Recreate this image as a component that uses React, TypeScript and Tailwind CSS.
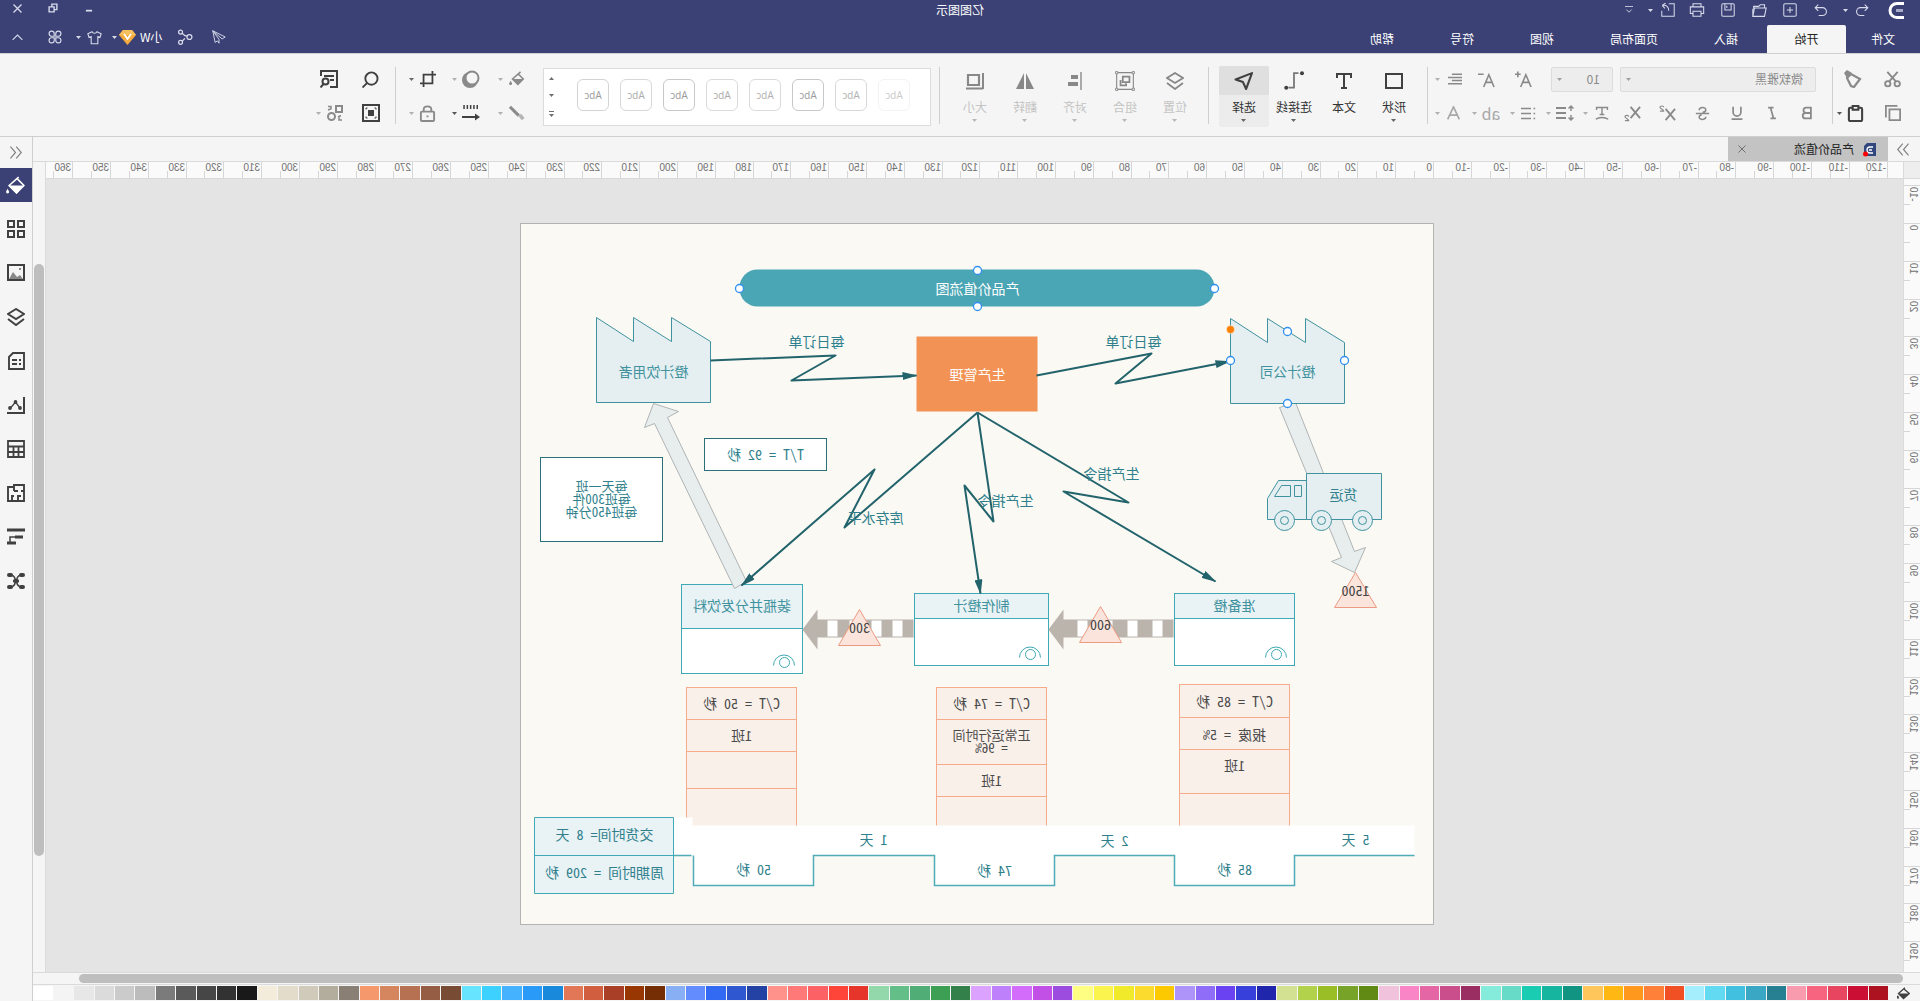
import type { ReactNode } from "react";

const PITCH = 37.8;

const palette = [
    "#ac1220", "#cb0e33", "#e84560", "#f7647f", "#f99bae",
    "#278092", "#3aa8c4", "#41c0e0", "#62daf1", "#a4eefd",
    "#f05023", "#ff8038", "#ff981c", "#ffb713", "#ffc65c",
    "#119482", "#16b59f", "#1acdb2", "#68dac8", "#85ecdb",
    "#9a2d61", "#c94e8b", "#e566a5", "#f985c6", "#f0c2dc",
    "#608a14", "#78a329", "#9abf26", "#b3d24c", "#d3e292",
    "#2026ab", "#3740da", "#6a42f2", "#906df9", "#ae93f9",
    "#fcc900", "#fadb2e", "#f0ea2b", "#fbf44e", "#fdfe82",
    "#9c4de0", "#c24fe6", "#d36bfb", "#bf80fb", "#dca2ff",
    "#33804a", "#3c9f54", "#51ad76", "#63be88", "#92d8ab",
    "#e6362b", "#ff4439", "#fb6165", "#ff7979", "#ff928b",
    "#2441a4", "#2f58d0", "#326af4", "#638dff", "#88aef4",
    "#752d03", "#983702", "#a93f27", "#d15e3e", "#e17757",
    "#198adb", "#2a9af8", "#45b2ff", "#3cd1ff", "#67e4ff",
    "#784c34", "#955d43", "#b57151", "#d5865e", "#f5986b",
    "#8a7f74", "#b3ad9d", "#cfcab9", "#e4dccb", "#f4ecda",
    "#191919", "#323232", "#464646", "#5a5a5a", "#7b7b7b",
    "#bcbcbc", "#cbcbcb", "#dbdbdb", "#e7e7e7", "#f4f4f4", "#ffffff",
];

function Icon({ size = 18, sw = 2, children }: { size?: number; sw?: number; children: ReactNode }) {
    return (
        <svg
            width={size}
            height={size}
            viewBox="0 0 18 18"
            fill="none"
            stroke="currentColor"
            strokeWidth={sw}
            className="shrink-0"
            aria-hidden="true"
        >
            {children}
        </svg>
    );
}

function Caret({ className = "text-[#b0b0b0]" }: { className?: string }) {
    return (
        <span className={`w-2 shrink-0 flex justify-center ${className}`}>
            <svg width="5" height="3" viewBox="0 0 5 3" fill="currentColor" aria-hidden="true">
                <path d="M0 0h5L2.5 3z" />
            </svg>
        </span>
    );
}

function Tool({ label, className, children }: { label: string; className: string; children: ReactNode }) {
    return (
        <button aria-label={label} className={`shrink-0 h-6 flex items-center justify-center ${className}`}>
            {children}
        </button>
    );
}

function Divider({ className = "" }: { className?: string }) {
    return <div className={`shrink-0 w-px h-[57px] mt-[13px] bg-[#cfcfcf] ${className}`} />;
}

function BigTool({ label, tone, active, caret = true, children }: {
    label: string; tone: string; active?: boolean; caret?: boolean; children: ReactNode;
}) {
    return (
        <button className={`shrink-0 w-[50px] h-[61px] mt-3 flex flex-col items-center rounded-xs overflow-hidden ${active ? "bg-[#ececec]" : ""}`}>
            <span className={`w-full h-[29px] flex items-center justify-center ${active ? "bg-[#dfdfdf]" : ""} ${tone}`}>
                {children}
            </span>
            <span className={`text-xs leading-4 mt-1 whitespace-nowrap ${tone === "text-[#404040]" ? "text-[#333]" : "text-[#c4c4c4]"}`}>{label}</span>
            {caret && <Caret className={tone === "text-[#404040]" ? "text-[#666] mt-1" : "text-[#b8b8b8] mt-1"} />}
        </button>
    );
}

function TitleBar() {
    return (
        <div className="h-5 grid grid-cols-[1fr_auto_1fr] grid-rows-[20px] items-center text-[#d8dbec]">
            <div className="h-5 flex items-center">
                <span className="w-8 ml-2 flex justify-center text-white">
                    <svg width="16" height="17" viewBox="0 0 16 17" fill="none" stroke="currentColor" aria-hidden="true">
                        <path d="M0 1.500h7a7 7 0 0 1 0 14H0" strokeWidth="3" />
                        <path d="M1 8.500h7" strokeWidth="3" stroke="#a7abc9" />
                    </svg>
                </span>
                <Tool label="撤销" className="w-6 ml-[6px]">
                    <Icon size={14} sw={1.400}><path d="M5.500 2 1.500 6l4 4M1.500 6H11a5 5 0 0 1 0 10H6" /></Icon>
                </Tool>
                <Caret className="text-[#d8dbec]" />
                <Tool label="重做" className="w-[31px] ml-[5px]">
                    <Icon size={14} sw={1.400}><path d="m12.500 2 4 4-4 4M16.500 6H7a5 5 0 0 0 0 10h5" /></Icon>
                </Tool>
                <Tool label="新建" className="w-[31px]">
                    <Icon size={14} sw={1.300}><rect x="1" y="1" width="16" height="16" rx="1.500" /><path d="M9 5v8M5 9h8" /></Icon>
                </Tool>
                <Tool label="打开" className="w-[31px]">
                    <Icon size={15} sw={1.300}><path d="M3 6V2h5l2 2h6v3M1 6h14l2 10H3L1 6zM17 16V7" /></Icon>
                </Tool>
                <Tool label="保存" className="w-[31px]">
                    <Icon size={14} sw={1.300}><rect x="1" y="1" width="16" height="16" rx="1.500" /><path d="M5 1v8h8V1M10.500 3.500v3" /></Icon>
                </Tool>
                <Tool label="打印" className="w-[31px]">
                    <Icon size={16} sw={1.200}><path d="M4.500 5V2h9v3M4.500 13H1.500V5.500h15V13h-3M4.500 10.500h9V16h-9z" /></Icon>
                </Tool>
                <Tool label="导出" className="w-[27px]">
                    <Icon size={14} sw={1.300}><path d="M8 1H1v16h16v-7M16 3c-5-1-8 2-8 7M16.500 3 12 0M16.500 3 13 7" /></Icon>
                </Tool>
                <Caret className="text-[#d8dbec]" />
                <Tool label="更多" className="w-9">
                    <Icon size={8} sw={2}><path d="M0 1h18M3 8l6 6 6-6" /></Icon>
                </Tool>
            </div>
            <h1 className="text-xs leading-5 text-white">亿图图示</h1>
            <div className="h-4 mb-1 flex items-center justify-end">
                <Tool label="最小化" className="w-9"><Icon size={8} sw={4}><path d="M2 15h14" /></Icon></Tool>
                <Tool label="还原" className="w-9">
                    <Icon size={10} sw={2.500}><path d="M7 7h9v9H7zM7 12H2V2h9v5" /></Icon>
                </Tool>
                <Tool label="关闭" className="w-[35px]"><Icon size={9} sw={2.500}><path d="m1 1 16 16M17 1 1 17" /></Icon></Tool>
            </div>
        </div>
    );
}

function MenuBar() {
    const tabs = ["插入", "页面布局", "视图", "符号", "帮助"];
    return (
        <nav className="h-7 mt-[5px] flex items-center text-xs text-white">
            <button className="w-[74px] h-full">文件</button>
            <button className="w-[79px] mr-px h-full bg-[#f5f5f5] text-[#222] rounded-t-xs">开始</button>
            {tabs.map((t) => (
                <button key={t} className="px-7 h-full">{t}</button>
            ))}
            <div className="ml-auto flex items-center pb-1 text-[#d8dbec]">
                <Tool label="发送" className="w-8">
                    <Icon size={14} sw={1.200}><path d="M17 1 1 9l4 2.500L17 1 9 12v5l2-3 3 2z" /></Icon>
                </Tool>
                <Tool label="分享" className="w-9 mr-1">
                    <Icon size={16} sw={1.400}><circle cx="4" cy="9" r="2.800" /><circle cx="14" cy="3.500" r="2.200" /><circle cx="14" cy="15" r="2.200" /><path d="M6.500 8 9 7.500l3-2.500M9 10.500l3 3" /></Icon>
                </Tool>
                <button className="flex items-center text-white">
                    小W
                    <svg width="17" height="15" viewBox="0 0 17 15" className="ml-1" aria-hidden="true">
                        <path d="M4 0h9l4 5-8.500 10L0 5z" fill="#f5ab3d" />
                        <path d="M4 0h9l4 5H0z" fill="#f8c05c" />
                        <path d="m5 4 3.500 5L12 4" fill="none" stroke="#fff" strokeWidth="1.800" />
                    </svg>
                </button>
                <Caret className="text-[#d8dbec]" />
                <Tool label="皮肤" className="w-6 ml-1">
                    <Icon size={15} sw={1.300}><path d="M6 2 1 4.500 2.500 9 5 8v8.500h8V8l2.500 1L17 4.500 12 2c-1 2.500-5 2.500-6 0z" /></Icon>
                </Tool>
                <Caret className="text-[#d8dbec]" />
                <Tool label="应用" className="w-10">
                    <Icon size={14} sw={1.500}>
                        <path d="M8 8H4.500A3.300 3.300 0 1 1 8 4.500zM10 8V4.500A3.300 3.300 0 1 1 13.500 8zM8 10v3.500A3.300 3.300 0 1 1 4.500 10zM10 10h3.500A3.300 3.300 0 1 1 10 13.500z" />
                    </Icon>
                </Tool>
                <Tool label="收起" className="w-[35px]"><Icon size={11} sw={1.800}><path d="m1 13 8-8 8 8" /></Icon></Tool>
            </div>
        </nav>
    );
}

function FontTools() {
    return (
        <div className="pl-[7px] text-[#8a8a8a]">
            <div className="h-[34px] pl-[9px] flex items-center text-xs">
                <label className="flex items-center">
                    <select aria-label="字体" className="appearance-none w-[196px] h-[25px] pl-3 bg-[#ededed] border border-[#dcdcdc] rounded-xs text-[#8a8a8a]">
                        <option>微软雅黑</option>
                    </select>
                    <span className="-ml-[13px] pointer-events-none"><Caret className="text-[#a0a0a0]" /></span>
                </label>
                <label className="flex items-center ml-3">
                    <select aria-label="字号" className="appearance-none w-[62px] h-[25px] pl-3 bg-[#ededed] border border-[#dcdcdc] rounded-xs text-[#8a8a8a]">
                        <option>10</option>
                    </select>
                    <span className="-ml-[13px] pointer-events-none"><Caret className="text-[#a0a0a0]" /></span>
                </label>
                <Tool label="增大字号" className="w-[30px] ml-[17px]">
                    <Icon size={17}><path d="m1 17 5.500-13L12 17M3 12h7M12 3.500h6M15 .5v6" strokeWidth="1.700" /></Icon>
                </Tool>
                <Tool label="减小字号" className="w-[30px] ml-[7px]">
                    <Icon size={17}><path d="m1 17 5.500-13L12 17M3 12h7M12 3.500h6" strokeWidth="1.700" /></Icon>
                </Tool>
                <Tool label="对齐方式" className="w-[26px] ml-1">
                    <Icon size={14}><path d="M0 3h13M0 7h18M0 11h13M0 15h18" /></Icon>
                </Tool>
                <Caret />
            </div>
            <div className="h-[34px] flex items-center">
                <Tool label="加粗" className="w-[35px]"><Icon size={14} sw={2.300}><path d="M4 2h6a3.400 3.400 0 0 1 0 7H4zM4 9h7a3.500 3.500 0 0 1 0 7H4z" /></Icon></Tool>
                <Tool label="倾斜" className="w-[35px]"><Icon size={14} sw={2.200}><path d="M7 2h7M4 16h7M11 2 7 16" /></Icon></Tool>
                <Tool label="下划线" className="w-[35px]"><Icon size={14} sw={2.200}><path d="M4 1v7a5 5 0 0 0 10 0V1M2 17h14" /></Icon></Tool>
                <Tool label="删除线" className="w-[34px]"><Icon size={15} sw={1.800}><path d="M1 9h16M13 5c0-4-8-4-8-.5 0 2 2 3 4 3M5 13c0 4 8 4 8 .5 0-2-1-2.500-3-3" /></Icon></Tool>
                <Tool label="上标" className="w-9">
                    <Icon size={17} sw={2}><path d="m1 4 10 12M11 4 1 16" /><path d="M13 2.500c0-2 4-2 4 0 0 1.500-4 2-4 4h4" strokeWidth="1.200" /></Icon>
                </Tool>
                <Tool label="下标" className="w-[34px]">
                    <Icon size={17} sw={2}><path d="m1 2 10 12M11 2 1 14" /><path d="M13 12.500c0-2 4-2 4 0 0 1.500-4 2-4 4h4" strokeWidth="1.200" /></Icon>
                </Tool>
                <Tool label="文字方向" className="w-6 ml-[2px]">
                    <Icon size={14}><path d="M2 5V2h14v3M9 2v9M6 11h6M1 17c4-3 12-3 16 0" strokeWidth="1.800" /></Icon>
                </Tool>
                <Caret />
                <Tool label="行距" className="w-6 ml-[5px]">
                    <Icon size={18}><path d="M8 4h10M8 9h10M8 14h10" /><path d="M3 3v4M3 15v-4M.5 4.500 3 2l2.500 2.500M.5 13.500 3 16l2.500-2.500" strokeWidth="1.500" /></Icon>
                </Tool>
                <Caret />
                <Tool label="列表" className="w-6 ml-1">
                    <Icon size={15}><path d="M6 3h12M6 9h12M6 15h12M1 3h2M1 9h2M1 15h2" /></Icon>
                </Tool>
                <Caret />
                <Tool label="大小写" className="w-6 ml-[6px] text-base leading-4 text-[#a8a8a8]">ab</Tool>
                <Caret />
                <Tool label="字体颜色" className="w-6 ml-[5px]">
                    <Icon size={15}><path d="m2 16 7-15 7 15M5 11h8" stroke="#a8a8a8" /></Icon>
                </Tool>
                <Caret />
            </div>
        </div>
    );
}

const styleTones = [
    "border-[#f3f3f3] text-[#c9c9c9]",
    "border-[#d8d8d8] text-[#b0b0b0]",
    "border-[#c8c8c8] text-[#999]",
    "border-[#dadada] text-[#b0b0b0]",
    "border-[#dadada] text-[#aaa]",
    "border-[#c8c8c8] text-[#999]",
    "border-[#d8d8d8] text-[#aaa]",
    "border-[#d3d3d3] text-[#999]",
];

function Ribbon() {
    return (
        <div className="h-[84px] flex bg-[#f5f5f5] border-y border-[#cfcfcf] shrink-0">
            <div className="w-[87px] shrink-0 pt-2 pl-[13px] text-[#8a8a8a]">
                <div className="h-[34px] flex items-center">
                    <Tool label="剪切" className="w-7">
                        <Icon size={17}><circle cx="4" cy="13.500" r="2.800" /><circle cx="14" cy="13.500" r="2.800" /><path d="m5.500 11 9-10M12.500 11l-9-10" /></Icon>
                    </Tool>
                    <Tool label="格式刷" className="w-7 ml-3">
                        <Icon size={18} sw={2.200}><path d="m2 9 9-5 4 4-4 8-3 1z" /><path d="m10 3 5-3 3 3-3 5z" fill="currentColor" stroke="none" /></Icon>
                    </Tool>
                </div>
                <div className="h-[34px] flex items-center">
                    <Tool label="复制" className="w-7">
                        <Icon size={16}><path d="M1 5h12v12H1zM4 1h13v13" /></Icon>
                    </Tool>
                    <Tool label="粘贴" className="w-6 ml-[11px] text-[#404040]">
                        <Icon size={17} sw={2.200}><rect x="2" y="3" width="14" height="14" rx="1.500" /><rect x="6" y="1" width="6" height="4" fill="#f5f5f5" /></Icon>
                    </Tool>
                    <Caret className="text-[#555]" />
                </div>
            </div>
            <Divider />
            <div className="pt-2"><FontTools /></div>
            <Divider className="ml-[6px] mr-2" />
            <BigTool label="形状" tone="text-[#404040]"><Icon><path d="M1 2h16v14H1z" /></Icon></BigTool>
            <BigTool label="文本" tone="text-[#404040]" caret={false}><Icon><path d="M2 6V2h14v4M9 2v14M6 16h6" /></Icon></BigTool>
            <BigTool label="连接线" tone="text-[#404040]">
                <Icon size={20}><path d="M5 2h4v13h5" stroke="#777" strokeWidth="1.600" /><circle cx="1.800" cy="2" r="1.800" fill="currentColor" stroke="none" /><circle cx="16" cy="15" r="1.800" fill="currentColor" stroke="none" /></Icon>
            </BigTool>
            <BigTool label="选择" tone="text-[#404040]" active><Icon size={19}><path d="m1 2 15.500 6-7 2.500L6.500 17z" strokeLinejoin="round" /></Icon></BigTool>
            <Divider className="ml-[10px] mr-2" />
            <BigTool label="位置" tone="text-[#888]"><Icon><path d="m9 1 8 5-8 5-8-5zM1 11l8 6 8-6" strokeWidth="1.800" /></Icon></BigTool>
            <BigTool label="组合" tone="text-[#888]">
                <Icon size={20}><path d="M1.500 1.500h15v15h-15z" strokeWidth="1" /><path d="M5 5h6v5H5zM13 8v5H8v-2" strokeWidth="1.600" /><path d="M.5.5h2v2h-2zM15.500.5h2v2h-2zM.5 15.500h2v2h-2zM15.500 15.500h2v2h-2z" fill="#f5f5f5" strokeWidth=".8" /></Icon>
            </BigTool>
            <BigTool label="对齐" tone="text-[#888]"><Icon><path d="M3 0v18" stroke="#aaa" /><path d="M6 5h7M6 12h10" strokeWidth="4" /></Icon></BigTool>
            <BigTool label="翻转" tone="text-[#888]"><Icon><path d="M8 1v16H0zM10 1v16h8z" fill="currentColor" stroke="none" /></Icon></BigTool>
            <BigTool label="大小" tone="text-[#888]"><Icon><path d="M5 3h11v10H5z" strokeWidth="2.200" /><path d="M1 1v16M1 16.500h17" /></Icon></BigTool>
            <Divider className="ml-[10px] mr-2" />
            <div className="shrink-0 w-[388px] h-[58px] mt-[14px] pl-5 pb-1 flex items-center gap-[11px] bg-white border border-[#dcdcdc]">
                {styleTones.map((tone, i) => (
                    <button key={i} className={`size-8 shrink-0 rounded-md border font-['Open_Sans',sans-serif] text-[10px] ${tone}`}>Abc</button>
                ))}
                <div className="ml-auto w-[18px] -mr-px h-full pt-2 pb-1 flex flex-col items-center justify-between text-[#707070]">
                    <button aria-label="上一行"><svg width="5" height="3" viewBox="0 0 5 3" className="block" fill="currentColor"><path d="M0 3h5L2.500 0z" /></svg></button>
                    <button aria-label="下一行"><svg width="5" height="3" viewBox="0 0 5 3" className="block" fill="currentColor"><path d="M0 0h5L2.500 3z" /></svg></button>
                    <button aria-label="更多样式"><svg width="5" height="6" viewBox="0 0 5 6" className="block" fill="currentColor"><path d="M0 0h5v1H0zM0 3h5L2.500 6z" /></svg></button>
                </div>
            </div>
            <div className="shrink-0 pt-2 pl-[14px] text-[#8a8a8a]">
                <div className="h-[34px] flex items-center">
                    <Tool label="填充" className="w-6">
                        <Icon size={16} sw={1.800}><path d="M5 1l9 8-6 6-6-6 5-5" /><path d="M2 9h12l-6 6zM16 11l2 3a1.500 1.500 0 0 1-3.500 0z" fill="currentColor" stroke="none" /></Icon>
                    </Tool>
                    <Caret />
                    <Tool label="阴影" className="w-6 ml-[14px]">
                        <Icon><circle cx="10" cy="10" r="8" fill="currentColor" stroke="none" /><circle cx="8" cy="8" r="6.500" fill="#f5f5f5" /></Icon>
                    </Tool>
                    <Caret />
                    <Tool label="裁剪" className="w-6 ml-[11px] text-[#404040]"><Icon size={16}><path d="M4 0v14h14M0 4h14v14" /></Icon></Tool>
                    <Caret className="text-[#666]" />
                </div>
                <div className="h-[34px] flex items-center">
                    <Tool label="线条" className="w-6">
                        <Icon size={16}><path d="M17 2 7 12" strokeWidth="3.500" /><path d="m2 16 4-5" strokeWidth="4" stroke="#b5b5b5" /></Icon>
                    </Tool>
                    <Caret />
                    <Tool label="线型" className="w-6 ml-[14px] text-[#404040]">
                        <Icon><path d="M2 3h15" strokeWidth="4" strokeDasharray="1.500 1.800" /><path d="M3 13h15" /><path d="M5 9.500v7L0 13z" fill="currentColor" stroke="none" /></Icon>
                    </Tool>
                    <Caret className="text-[#555]" />
                    <Tool label="锁定" className="w-6 ml-[11px]"><Icon size={17}><rect x="2" y="7" width="14" height="10" rx="1" /><path d="M5 7V4.500C5 .5 13 .5 13 4.500V7M8 12h2" /></Icon></Tool>
                    <Caret />
                </div>
            </div>
            <Divider className="ml-3 mr-3" />
            <div className="shrink-0 pt-2 text-[#404040]">
                <div className="h-[34px] flex items-center">
                    <Tool label="查找" className="w-6"><Icon size={17}><circle cx="8" cy="8" r="6.500" /><path d="m12.500 12.500 5 5" /></Icon></Tool>
                    <Tool label="查找替换" className="w-6 ml-[18px]">
                        <Icon size={18}><path d="M8 17H1V1h16v5M4 6h10M4 10h4" /><circle cx="12.500" cy="11.500" r="3" fill="#f5f5f5" /><path d="m14.500 14 3 3.500" /></Icon>
                    </Tool>
                </div>
                <div className="h-[34px] flex items-center">
                    <Tool label="适应窗口" className="w-6">
                        <Icon size={18} sw={2}><path d="M1 1h16v16H1z" /><path d="M6 6h6v6H6z" fill="currentColor" stroke="none" /><path d="M4 5.500V4h1.500M14 5.500V4h-1.500M4 12.500V14h1.500M14 12.500V14h-1.500" strokeWidth="1" /></Icon>
                    </Tool>
                    <Tool label="替换" className="w-6 ml-3 text-[#8a8a8a]">
                        <Icon size={18}><path d="M2 2h6v6H2z" /><circle cx="12.500" cy="12.500" r="3.500" /><path d="M13 5V2.500h3M12.500 4.500 16 6M5 13v3H2M6 13l-3-1.500" strokeWidth="1.500" /></Icon>
                    </Tool>
                    <Caret />
                </div>
            </div>
        </div>
    );
}

function TabStrip() {
    return (
        <div className="h-[25px] flex items-stretch border-b border-[#dadada]">
            <button aria-label="展开符号库" className="w-8 flex items-center justify-center text-[#808080]">
                <Icon size={13} sw={1.600}><path d="m2 1 7 8-7 8M10 1l7 8-7 8" /></Icon>
            </button>
            <div className="w-40 flex items-center bg-[#c3c3c3] text-xs text-[#222]">
                <svg width="13" height="15" viewBox="0 0 13 15" className="ml-3" aria-hidden="true">
                    <path d="M0 1h9l3 3v10H0z" fill="#33477f" />
                    <path d="M3 5h3a3 3 0 0 1 0 6H3M4 8h3" fill="none" stroke="#fff" strokeWidth="1.300" />
                    <circle cx="10.500" cy="12" r="2.500" fill="#f00" />
                </svg>
                <span className="ml-[9px]">产品价值流</span>
                <button aria-label="关闭标签" className="ml-auto mr-[10px] text-[#666]">
                    <Icon size={8} sw={2}><path d="m1 1 16 16M17 1 1 17" /></Icon>
                </button>
            </div>
        </div>
    );
}

function TopRuler() {
    // 36 steps of ten on the right of the page origin, 12 on its left
    const marks = Array.from({ length: 49 }, (_, i) => i - 12);
    return (
        <svg className="block w-full h-[17px] bg-[#fafafa] border-b border-[#dadada] font-['Liberation_Sans',sans-serif] text-[10px]">
            {marks.map((m) => {
                const x = Math.round(469 + m * PITCH);
                return (
                    <g key={m}>
                        <path d={`M${x} 0h1v17h-1zM${x + 19} 9h1v8h-1z`} fill="#d6d6d6" />
                        <text x={x + 2} y="9" fill="#707070">{m * 10}</text>
                    </g>
                );
            })}
        </svg>
    );
}

function SideRuler() {
    const marks = Array.from({ length: 21 }, (_, i) => i - 1);
    return (
        <svg className="block w-[17px] h-full shrink-0 bg-[#fafafa] border-r border-[#dadada] font-['Liberation_Sans',sans-serif] text-[10px]">
            {marks.map((m) => {
                const y = Math.round(44 + m * PITCH);
                return (
                    <g key={m}>
                        <path d={`M0 ${y}h17v1H0zM10 ${y + 19}h7v1h-7z`} fill="#d6d6d6" />
                        <text transform={`translate(10 ${y + 2}) rotate(-90)`} textAnchor="end" fill="#707070">{m * 10}</text>
                    </g>
                );
            })}
        </svg>
    );
}

const TEAL = "#3f929e";

function Txt({ x, y, fill = "#2f7f8c", children }: { x: number; y: number; fill?: string; children: string }) {
    return <text x={x} y={y + 4} fill={fill} textAnchor="middle">{children}</text>;
}

function Factory({ x, y }: { x: number; y: number }) {
    return (
        <path
            transform={`translate(${x} ${y})`}
            d="M0 85V24L39 0v24L77 0v24L114 0v85z"
            fill="#e5eff1"
            stroke={TEAL}
        />
    );
}

function Process({ x, y, w, h, head, name }: { x: number; y: number; w: number; h: number; head: number; name: string }) {
    return (
        <g>
            <g stroke="#3fa9b5">
                <rect x={x} y={y} width={w} height={h} fill="#fff" />
                <rect x={x} y={y} width={w} height={head} fill="#e9f2f5" />
                <circle cx={x + 18} cy={y + h - 11} r="5" fill="none" />
                <path d={`M${x + 8} ${y + h - 8}a10.500 10.500 0 0 1 21 0`} fill="none" />
            </g>
            <Txt x={x + w / 2} y={y + Math.round(head / 2)} fill="#3f929e">{name}</Txt>
        </g>
    );
}

function PushArrow({ x, len, gaps }: { x: number; len: number; gaps: number[] }) {
    return (
        <g transform={`translate(${x} 387)`}>
            <path d={`M0 9h${len - 15}V-1l15 20-15 20V27H0z`} fill="#bbb4ad" />
            {gaps.map((g) => <rect key={g} x={g} y="10" width="10" height="16" fill="#fff" />)}
        </g>
    );
}

function Stock({ x, y, h, count }: { x: number; y: number; h: number; count: string }) {
    return (
        <g>
            <path d={`M${x} ${y}l21 ${h}h-42z`} fill="#fae4dc" stroke="#ee9a82" />
            <Txt x={x} y={y + 19} fill="#444">{count}</Txt>
        </g>
    );
}

function DataColumn({ x, rows, w = 110 }: { x: number; rows: number[]; w?: number }) {
    const last = rows[rows.length - 1];
    return (
        <g stroke="#f6ab8c">
            <rect x={x} y={rows[0]} width={w} height={last - rows[0]} fill="#faf0ea" />
            {rows.slice(1, -1).map((r) => <path key={r} d={`M${x} ${r}h${w}`} />)}
        </g>
    );
}

const zigzags = [
    "M397 152 282 130 318 160 204 138",
    "M723 137 598 132 642 157 517 152",
    "M456 189 305 279 370 268 218 358",
    "M456 189 440 298 469 262 453 370",
    "M456 189 589 304 559 246 692 362",
];

const handles = [
    [456, 47], [456, 83], [219, 65], [694, 65],
    [146, 108], [89, 137], [203, 137], [146, 180],
];

function Diagram() {
    return (
        <svg
            width="914"
            height="702"
            viewBox="0 0 914 702"
            className="absolute left-[469px] top-[44px] bg-[#faf9f4] outline -outline-offset-1 outline-[#b3b3b3] font-['Noto_Sans_Mono_CJK_SC','Noto_Sans_CJK_SC',sans-serif] text-sm"
        >
            <defs>
                <marker id="tip" viewBox="0 0 15 8" refX="14" refY="4" markerWidth="15" markerHeight="8" markerUnits="userSpaceOnUse" orient="auto">
                    <path d="M0 0l15 4-15 4z" fill="#23646c" />
                </marker>
            </defs>
            <g transform="translate(.5 .5)">
                <rect x="219" y="46" width="475" height="37" rx="18" fill="#4aa5b4" />
                <Txt x={456} y={66} fill="#fff">产品价值流图</Txt>

                <path d="M154 184 138 179 79 328 68 324 79 349 102 338 92 334z" fill="#e8eeee" stroke="#b0b4b4" />
                <Factory x={89} y={95} />
                <Txt x={146} y={149} fill="#3f929e">橙汁公司</Txt>
                <Factory x={723} y={94} />
                <Txt x={780} y={149} fill="#3f929e">橙汁饮用者</Txt>

                <rect x="396" y="113" width="121" height="75" fill="#f29254" />
                <Txt x={456} y={152} fill="#fff">生产管理</Txt>

                <g fill="#e5eff1" stroke={TEAL}>
                    <path d="M52 250h75v46H52zM127 257h28l11 18v21h-39zM132 262h7v11h-7zM143 262h9l7 11h-16z" />
                    {[71, 112, 149].map((cx) => (
                        <g key={cx}>
                            <circle cx={cx} cy="297" r="10" />
                            <circle cx={cx} cy="297" r="4" />
                        </g>
                    ))}
                </g>
                <Txt x={90} y={272}>货运</Txt>

                <g fill="#fff" stroke="#2a7078">
                    <rect x="607" y="215" width="122" height="32" />
                    <rect x="771" y="234" width="122" height="84" />
                </g>
                <Txt x={668} y={232}>T/T = 92 秒</Txt>
                <g className="text-[13px]">
                    <Txt x={832} y={263}>每天一班</Txt>
                    <Txt x={832} y={276}>每班300件</Txt>
                    <Txt x={832} y={289}>每班450分钟</Txt>
                </g>

                <Process x={139} y={370} w={120} h={72} head={25} name="准备橙" />
                <Process x={385} y={370} w={134} h={72} head={25} name="制作橙汁" />
                <Process x={631} y={361} w={121} h={89} head={44} name="装瓶并分发饮料" />
                <path d="M780 180 755 188 766 194 687 358 699 365 779 200 789 204z" fill="#e8eeee" stroke="#b0b4b4" />

                <PushArrow x={260} len={125} gaps={[11, 36, 61, 86]} />
                <PushArrow x={520} len={111} gaps={[11, 32, 54, 76]} />
                <Stock x={78} y={349} h={35} count="1500" />
                <Stock x={333} y={383} h={36} count="600" />
                <Stock x={574} y={386} h={36} count="300" />

                <g fill="none" stroke="#23646c" strokeWidth="2" strokeLinejoin="round">
                    {zigzags.map((d) => <path key={d} d={d} markerEnd="url(#tip)" />)}
                </g>
                <Txt x={300} y={119}>每日订单</Txt>
                <Txt x={617} y={119}>每日订单</Txt>
                <Txt x={322} y={251}>生产指令</Txt>
                <Txt x={428} y={278}>生产指令</Txt>
                <Txt x={558} y={295}>库存水平</Txt>

                <DataColumn x={144} rows={[461, 494, 526, 570, 606]} />
                <DataColumn x={387} rows={[464, 496, 541, 573, 606]} />
                <DataColumn x={637} rows={[464, 496, 528, 565, 606]} />
                <Txt x={199} y={479} fill="#4a4a4a">C/T = 85 秒</Txt>
                <Txt x={199} y={512} fill="#4a4a4a">报废 = 5%</Txt>
                <Txt x={199} y={543} fill="#4a4a4a">1班</Txt>
                <Txt x={442} y={481} fill="#4a4a4a">C/T = 74 秒</Txt>
                <g className="text-[13px]">
                    <Txt x={442} y={512} fill="#4a4a4a">正常运行时间</Txt>
                    <Txt x={442} y={525} fill="#4a4a4a">= 96%</Txt>
                </g>
                <Txt x={442} y={558} fill="#4a4a4a">1班</Txt>
                <Txt x={692} y={481} fill="#4a4a4a">C/T = 50 秒</Txt>
                <Txt x={692} y={513} fill="#4a4a4a">1班</Txt>

                <path d="M19 602h722v-8h19v38H740v30H620v-30H499v30H379v-30H259v30H139v-30H19z" fill="#fff" />
                <path d="M19 632h120v30h120v-30h120v30h120v-30h121v30h120v-30M742 632h18" fill="none" stroke="#4fadb8" strokeWidth="1.500" />
                <Txt x={78} y={617}>5 天</Txt>
                <Txt x={319} y={618}>2 天</Txt>
                <Txt x={560} y={617}>1 天</Txt>
                <Txt x={199} y={647}>85 秒</Txt>
                <Txt x={439} y={648}>74 秒</Txt>
                <Txt x={680} y={647}>50 秒</Txt>

                <path d="M760 594h139v76H760zM760 632h139" fill="#e9f2f5" stroke="#3fa9b5" />
                <Txt x={829} y={612}>交货时间= 8 天</Txt>
                <Txt x={829} y={650}>周期时间 = 209 秒</Txt>

                {handles.map(([cx, cy]) => (
                    <circle key={`${cx}-${cy}`} cx={cx} cy={cy} r="4" fill="#fff" stroke="#2f8fef" strokeWidth="1.300" />
                ))}
                <circle cx="203" cy="106" r="4" fill="#ff7f00" stroke="#fff" strokeWidth=".5" />
            </g>
        </svg>
    );
}

const panelIcons: { label: string; icon: ReactNode }[] = [
    { label: "符号库", icon: <path d="M1 1h6v6H1zM11 1h6v6h-6zM1 11h6v6H1zM11 11h6v6h-6z" /> },
    { label: "图片", icon: <><path d="M1 1h16v15H1z" /><path d="M2 15l3-4 3 2 4-5 4 7zM4 4h2v2H4z" fill="#888" stroke="none" /></> },
    { label: "图层", icon: <path d="m9 1 8 5-8 5-8-5zM1 11l8 6 8-6" strokeWidth="2" /> },
    { label: "备注", icon: <path d="M1 1h11l4 4v12H1zM4 8h2M8 8h5M4 12h2M8 12h5" strokeWidth="1.900" /> },
    { label: "图表", icon: <><path d="M1 1v16h17" /><path d="m5 12 4.500-6 5 6" strokeWidth="1.300" /><circle cx="5" cy="12" r="1.900" fill="currentColor" stroke="none" /><circle cx="9.500" cy="6" r="1.900" fill="currentColor" stroke="none" /><circle cx="15" cy="12" r="1.900" fill="currentColor" stroke="none" /></> },
    { label: "表格", icon: <path d="M1 1h16v16H1zM1 6.500h16M1 12h16M6.500 6v11M11.500 6v11" strokeWidth="1.800" /> },
    { label: "平面图", icon: <path d="M11 3h6v14H1V1h10v6M1 7h3M7 7h4M7 17v-5H4M11 12h2v5" strokeWidth="1.900" /> },
    { label: "甘特图", icon: <><path d="M0 2h18M2 9h8M9 15h9" strokeWidth="3" /><path d="M10 9h5v5" strokeWidth="1.500" /></> },
    { label: "思维导图", icon: <><path d="M3 3c6 0 5 6 6 6s0-6 6-6M3 15c6 0 5-6 6-6s0 6 6 6M6 9h6" strokeWidth="1.500" /><path d="M2 3h2M14 3h2M2 15h2M14 15h2M8 9h2" strokeWidth="4" strokeLinecap="round" /></> },
];

function SidePanel() {
    return (
        <aside className="w-[33px] shrink-0 border-l border-[#cfcfcf] text-[#404040]">
            <button aria-label="收起面板" className="w-full h-[31px] flex items-center justify-center text-[#808080]">
                <Icon size={13} sw={1.600}><path d="M8 1 1 9l7 8M16 1 9 9l7 8" /></Icon>
            </button>
            <button aria-label="样式" className="w-full h-[34px] flex items-center justify-center bg-[#3b4174] text-white">
                <Icon size={19} sw={1.500}><path d="M6 1l9 8-7 7-7-7 6-6" /><path d="M1 9h15l-8 8zM16.500 12l1.500 3a1.500 1.500 0 0 1-3 0z" fill="currentColor" stroke="none" /></Icon>
            </button>
            <div className="pt-[5px]">
                {panelIcons.map(({ label, icon }) => (
                    <button key={label} aria-label={label} className="w-full h-11 flex items-center justify-center">
                        <Icon size={18}>{icon}</Icon>
                    </button>
                ))}
            </div>
        </aside>
    );
}

function ColorBar() {
    return (
        <div className="h-[17px] flex items-center bg-[#f5f5f5] border-t border-[#dadada]">
            <button aria-label="填充颜色" className="w-8 flex justify-center text-[#404040]">
                <Icon size={13} sw={1.800}><path d="M7 1l9 8-7 7-8-7 7-6" /><path d="M1 9h15l-7 7zM16 12h2v4h-3z" fill="currentColor" stroke="none" /></Icon>
            </button>
            <div className="flex-1 h-[14px] flex gap-px">
                {palette.map((c) => (
                    <button key={c} aria-label={c} className="flex-1" style={{ backgroundColor: c }} />
                ))}
            </div>
        </div>
    );
}

export default function App() {
    return (
        <div className="h-screen flex flex-col -scale-x-100 overflow-hidden bg-[#f5f5f5] font-['Noto_Sans_CJK_SC',sans-serif]">
            <header className="shrink-0 h-[53px] bg-[#3b4174]">
                <TitleBar />
                <MenuBar />
            </header>
            <Ribbon />
            <div className="flex-1 min-h-0 flex">
                <div className="flex-1 min-w-0 flex flex-col">
                    <TabStrip />
                    <div className="flex-1 min-h-0 flex">
                        <div className="shrink-0 flex flex-col">
                            <div className="h-[17px] w-[17px] shrink-0 bg-[#eee] border-r border-b border-[#dadada]" />
                            <div className="flex-1 min-h-0"><SideRuler /></div>
                        </div>
                        <div className="flex-1 min-w-0 flex flex-col">
                            <TopRuler />
                            <main className="flex-1 relative overflow-hidden bg-[#e4e4e4]">
                                <Diagram />
                            </main>
                        </div>
                        <div className="w-[13px] shrink-0 flex flex-col items-center border-l border-[#dadada]">
                            <div className="mt-[102px] w-[10px] h-[592px] rounded-full bg-[#bebebe]" />
                        </div>
                    </div>
                    <div className="h-[12px] shrink-0 pt-px border-t border-[#dadada] pl-[17px] pr-[46px]">
                        <div className="h-[9px] rounded-full bg-[#bebebe]" />
                    </div>
                    <ColorBar />
                </div>
                <SidePanel />
            </div>
        </div>
    );
}
